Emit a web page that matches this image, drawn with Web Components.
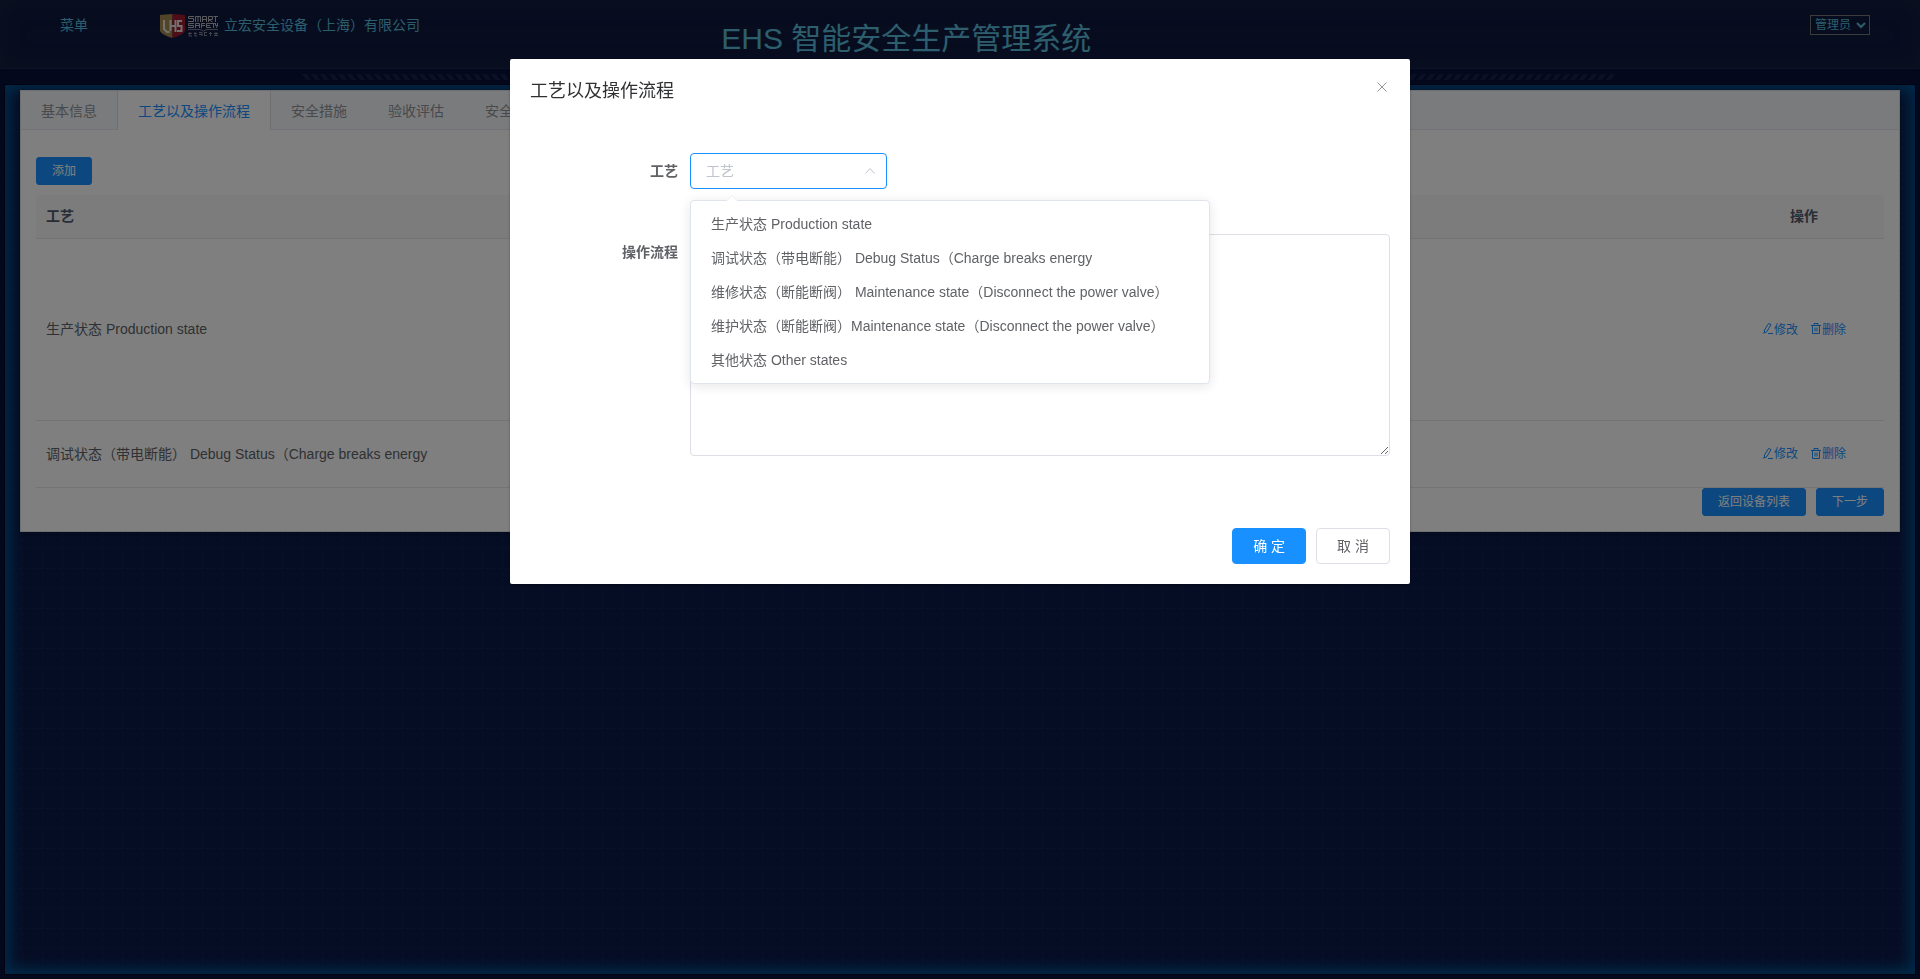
<!DOCTYPE html>
<html lang="zh-CN">
<head>
<meta charset="utf-8">
<title>EHS 智能安全生产管理系统</title>
<style>
  html, body {
    height: 100%;
    margin: 0;
  }
  body {
    background: #06103a;
    font-family: "Liberation Sans", "Noto Sans CJK SC", sans-serif;
    font-size: 14px;
    color: #606266;
    overflow: hidden;
  }
</style>
</head>
<body>
<ehs-app>
  <ehs-header slot="header" company="立宏安全设备（上海）有限公司" user="管理员">EHS 智能安全生产管理系统</ehs-header>
  <tab-card active="1" tabs="基本信息,工艺以及操作流程,安全措施,验收评估,安全">
    <process-table></process-table>
  </tab-card>
  <modal-dialog slot="modal" heading="工艺以及操作流程">
    <process-form></process-form>
  </modal-dialog>
</ehs-app>

<script>
const base = `
  <style>
    *, *::before, *::after { box-sizing: border-box; }
    button, select, textarea { font-family: inherit; }
    button { cursor: pointer; white-space: nowrap; }
  </style>
`;

const buttonStyle = `
  <style>
    .btn {
      height: 36px;
      padding: 0 20px;
      border: 1px solid #dcdfe6;
      border-radius: 4px;
      background: #fff;
      color: #606266;
      font-size: 14px;
      line-height: 20px;
    }
    .btn.primary {
      background: #1890ff;
      border-color: #1890ff;
      color: #fff;
    }
    .btn.mini {
      height: 28px;
      padding: 0 15px;
      border-radius: 3px;
      font-size: 12px;
    }
  </style>
`;

class BaseElement extends HTMLElement {
  constructor() {
    super();
    this.attachShadow({mode: 'open'});
  }

  connectedCallback() {
    this.shadowRoot.innerHTML = base + this.render();
  }
}


class EhsApp extends BaseElement {
  render() {
    const grid = encodeURIComponent(`<svg xmlns="http://www.w3.org/2000/svg" width="20" height="20"><path d="M0 3.5H20M17.5 0V20" stroke="#15234c" stroke-dasharray="4 2.67"/></svg>`);
    return `
      <style>
        :host {
          display: flex;
          flex-direction: column;
          height: 100vh;
        }
        .stripes {
          display: flex;
          height: 16px;
          padding: 5px 304px;
        }
        .stripes i {
          flex: 1;
          height: 6px;
          background: repeating-linear-gradient(90deg, #16224a 0 5px, transparent 5px 9px);
        }
        .stripes i:first-child { transform: skewX(40deg); }
        .stripes i:last-child { transform: skewX(-40deg); }
        main {
          flex: 1;
          margin: 0 5px 5px;
          padding: 5px 15px;
          background: url("data:image/svg+xml,${grid}") #0b1a48;
          box-shadow: inset 0 0 14px 6px #02508e, 0 0 0 1px #020820;
        }
        .mask {
          position: fixed;
          inset: 0;
          background: rgba(0, 0, 0, .5);
        }
        .modal {
          position: fixed;
          inset: 0;
          display: flex;
          justify-content: center;
          align-items: flex-start;
          padding-top: 6vh;
        }
      </style>
      <slot name="header"></slot>
      <div class="stripes"><i></i><i></i></div>
      <main><slot></slot></main>
      <div class="mask"></div>
      <div class="modal"><slot name="modal"></slot></div>
    `;
  }
}


class EhsLogo extends BaseElement {
  render() {
    return `
      <style>
        :host { display: block; }
        svg { display: block; }
      </style>
      <svg width="59" height="24" viewBox="0 0 59 24" fill="none">
        <path d="M0 1L12.500 0V24Q2 21 0 17Z" fill="#a58a4e"/>
        <path d="M12.500 0L25 1V17Q23 21 12.500 24Z" fill="#a01a2e"/>
        <path d="M4 6V15L7 18H9.500M10.500 6V17M15.500 6V18M10.500 12H15.500M22 7H18V12H21.500V17H17" stroke="#e6e2dc" stroke-width="2"/>
        <g stroke="#b4b4bc" stroke-width="1">
          <path d="M34 2.500H28.500V4.500H33.500V7.500H28M35.500 8V2.500H40.500V8M38 2V8M42.500 8V2.500H46.500V8M42 5.500H46M48.500 8V2.500H52.500V5.500H48.500L52.500 8M53.500 2.500H58M55.500 2V8"/>
          <path d="M34 9.500H28.500V11.500H33.500V13.500H28M35.500 14V9.500H39.500V14M35 11.500H39M41.500 14V9.500H45M41 11.500H45M51 9.500H46.500V13.500H51M46 11.500H50M51 9.500H55M53.500 9V14M55.500 9V11.500H58M57.500 9V12L56 14"/>
          <path d="M28 15.500H40L43.500 17L47 15.500H58" stroke="#77778a"/>
          <path d="M28 19.500H32M30 18L29 22H32M34 19.500H37M35 18V22H37M39 18.500H42V22M39 20.500H42M44 18.500H47M44.500 18V22M44 21.500H47M49 19.500H52M50.500 18V22M54 19.500H58M56 18V22M54 21.500H58" stroke="#85859a"/>
        </g>
      </svg>
    `;
  }
}


class EhsHeader extends BaseElement {
  render() {
    return `
      <style>
        :host {
          display: grid;
          grid-template-columns: 19fr 33fr;
          box-sizing: border-box;
          height: 69px;
          flex: none;
          padding: 0 50px 0 60px;
          border-bottom: 1px solid #1c2748;
          background: #0e1a3e;
          box-shadow: inset 0 0 20px 2px #15223f;
          color: #5abcda;
        }
        .left, .right {
          display: flex;
          align-items: flex-start;
        }
        .left { padding-top: 14px; }
        .right { justify-content: space-between; padding-top: 15px; }
        a {
          width: 100px;
          color: inherit;
          text-decoration: none;
        }
        a, .company { line-height: 22px; }
        .company { margin-left: 5px; }
        h1 {
          margin: 0;
          font-size: 30px;
          line-height: 48px;
          font-weight: 400;
        }
        select {
          width: 60px;
          height: 20px;
          padding: 0;
          border: 1px solid #767676;
          background: transparent;
          color: inherit;
          font-size: 12px;
        }
      </style>
      <div class="left">
        <a href="#menu">菜单</a>
        <ehs-logo></ehs-logo>
        <span class="company">${this.getAttribute('company')}</span>
      </div>
      <div class="right">
        <h1><slot></slot></h1>
        <select aria-label="用户"><option>${this.getAttribute('user')}</option></select>
      </div>
    `;
  }
}


class TabCard extends BaseElement {
  render() {
    const active = Number(this.getAttribute('active'));
    const tabs = this.getAttribute('tabs').split(',').map((name, i) =>
      `<button role="tab" aria-selected="${i === active}">${name}</button>`).join('');
    return `
      <style>
        :host {
          display: block;
          border: 1px solid #dcdfe6;
          background: #fff;
          box-shadow: 0 2px 4px rgba(0, 0, 0, .12), 0 0 6px rgba(0, 0, 0, .04);
        }
        .tabs {
          display: flex;
          height: 39px;
          background: #f5f7fa;
          border-bottom: 1px solid #e4e7ed;
        }
        .tabs button {
          height: 39px;
          padding: 0 20px 2px;
          border: solid transparent;
          border-width: 0 1px 0 0;
          background: none;
          color: #909399;
          font-size: 14px;
        }
        .tabs button[aria-selected="true"] {
          margin-left: -1px;
          border-color: #dcdfe6;
          border-width: 0 1px;
          background: #fff;
          color: #1890ff;
        }
        .body { padding: 27px 15px 15px; }
      </style>
      <div class="tabs" role="tablist">${tabs}</div>
      <div class="body"><slot></slot></div>
    `;
  }
}


class ProcessTable extends BaseElement {
  render() {
    const actions = `
      <a href="#edit">
        <svg viewBox="0 0 12 12"><path d="M6.500 1.500L9 2.500L5 9.500L2.500 11L2.500 8ZM1 11.500L2.500 10M6 11.500H11"/></svg>修改
      </a>
      <a href="#delete">
        <svg viewBox="0 0 12 12"><path d="M1 3.500H11M4 3.500V1.500H8V3.500M2.500 3.500V11.500H9.500V3.500M5 5.500V9.500M7 5.500V9.500"/></svg>删除
      </a>`;
    return buttonStyle + `
      <style>
        :host { display: block; }
        table {
          width: 100%;
          margin-top: 10px;
          border-collapse: separate;
          border-spacing: 0;
          table-layout: fixed;
        }
        th, td {
          padding: 0 10px 3px;
          border-bottom: 1px solid #e4e7ed;
          text-align: left;
        }
        th {
          height: 44px;
          background: #f8f8f9;
          color: #515a6e;
        }
        td { height: 67px; }
        tr.tall td { height: 182px; }
        .ops {
          width: 160px;
          text-align: center;
        }
        .links {
          display: flex;
          justify-content: center;
          gap: 12px;
        }
        a {
          display: flex;
          align-items: center;
          color: #1890ff;
          font-size: 12px;
          text-decoration: none;
        }
        svg {
          width: 12px;
          height: 12px;
          fill: none;
          stroke: currentColor;
        }
        footer {
          display: flex;
          justify-content: flex-end;
          gap: 10px;
        }
      </style>
      <button class="btn primary mini">添加</button>
      <table>
        <thead>
          <tr><th>工艺</th><th class="ops">操作</th></tr>
        </thead>
        <tbody>
          <tr class="tall">
            <td>生产状态 Production state</td>
            <td><div class="links">${actions}</div></td>
          </tr>
          <tr>
            <td>调试状态（带电断能） Debug Status（Charge breaks energy</td>
            <td><div class="links">${actions}</div></td>
          </tr>
        </tbody>
      </table>
      <footer>
        <button class="btn primary mini">返回设备列表</button>
        <button class="btn primary mini">下一步</button>
      </footer>
    `;
  }
}


class ModalDialog extends BaseElement {
  render() {
    return buttonStyle + `
      <style>
        :host {
          display: block;
          width: 900px;
          max-width: 100%;
          border-radius: 2px;
          background: #fff;
          box-shadow: 0 1px 3px rgba(0, 0, 0, .3);
        }
        header {
          display: flex;
          justify-content: space-between;
          align-items: flex-start;
          padding: 20px 20px 10px;
        }
        h2 {
          margin: 0;
          color: #303133;
          font-size: 18px;
          line-height: 24px;
          font-weight: 400;
        }
        .close {
          width: 16px;
          height: 16px;
          padding: 0;
          border: 0;
          background: none;
          color: #909399;
        }
        .close svg {
          display: block;
          fill: none;
          stroke: currentColor;
        }
        .body { padding: 40px 20px 52px; }
        footer {
          display: flex;
          justify-content: flex-end;
          gap: 10px;
          padding: 20px;
        }
      </style>
      <header>
        <h2>${this.getAttribute('heading')}</h2>
        <button class="close" aria-label="关闭"><svg width="16" height="16"><path d="M3.500 3.500L12.500 12.500M12.500 3.500L3.500 12.500"/></svg></button>
      </header>
      <div class="body"><slot></slot></div>
      <footer>
        <button class="btn primary">确 定</button>
        <button class="btn">取 消</button>
      </footer>
    `;
  }
}


class OptionMenu extends BaseElement {
  render() {
    return `
      <style>
        :host {
          display: block;
          position: absolute;
          top: 100%;
          left: 0;
          z-index: 2;
          width: 520px;
          margin-top: 11px;
          padding: 6px 0;
          border: 1px solid #dfe4ed;
          border-radius: 4px;
          background: #fff;
          box-shadow: 0 2px 12px rgba(0, 0, 0, .1);
        }
        .arrow {
          position: absolute;
          top: -6px;
          left: 35px;
        }
        ul {
          margin: 0;
          padding: 0;
          list-style: none;
        }
        ::slotted(li) {
          padding: 0 20px;
          line-height: 34px;
          white-space: nowrap;
        }
      </style>
      <svg class="arrow" width="12" height="7"><path d="M0 6.500L6 .5L12 6.500" fill="#fff" stroke="#ebeef5"/></svg>
      <ul role="listbox"><slot></slot></ul>
    `;
  }
}


class ProcessForm extends BaseElement {
  render() {
    const options = [
      '生产状态 Production state',
      '调试状态（带电断能） Debug Status（Charge breaks energy',
      '维修状态（断能断阀） Maintenance state（Disconnect the power valve）',
      '维护状态（断能断阀）Maintenance state（Disconnect the power valve）',
      '其他状态 Other states'
    ];
    return `
      <style>
        :host {
          display: grid;
          grid-template-columns: 160px 1fr;
          row-gap: 45px;
        }
        label {
          padding-right: 12px;
          text-align: right;
          line-height: 36px;
          font-weight: 700;
        }
        .select {
          position: relative;
          width: 197px;
          height: 36px;
        }
        select, textarea {
          display: block;
          width: 100%;
          border: 1px solid #dcdfe6;
          border-radius: 4px;
          background: #fff;
          font-size: 14px;
        }
        select {
          height: 36px;
          padding: 0 30px 0 15px;
          border-color: #1890ff;
          color: #c0c4cc;
          appearance: none;
        }
        .caret {
          position: absolute;
          top: 12px;
          right: 11px;
          fill: none;
          stroke: #c0c4cc;
        }
        textarea {
          height: 222px;
          padding: 5px 15px;
          resize: vertical;
        }
      </style>
      <label for="process">工艺</label>
      <div class="select">
        <select id="process"><option>工艺</option></select>
        <svg class="caret" width="12" height="12"><path d="M1.500 8.500L6 3.500L10.500 8.500"/></svg>
        <option-menu>${options.map(text => `<li role="option">${text}</li>`).join('')}</option-menu>
      </div>
      <label for="flow">操作流程</label>
      <textarea id="flow"></textarea>
    `;
  }
}

customElements.define('ehs-logo', EhsLogo);
customElements.define('ehs-header', EhsHeader);
customElements.define('process-table', ProcessTable);
customElements.define('tab-card', TabCard);
customElements.define('option-menu', OptionMenu);
customElements.define('process-form', ProcessForm);
customElements.define('modal-dialog', ModalDialog);
customElements.define('ehs-app', EhsApp);
</script>
</body>
</html>
